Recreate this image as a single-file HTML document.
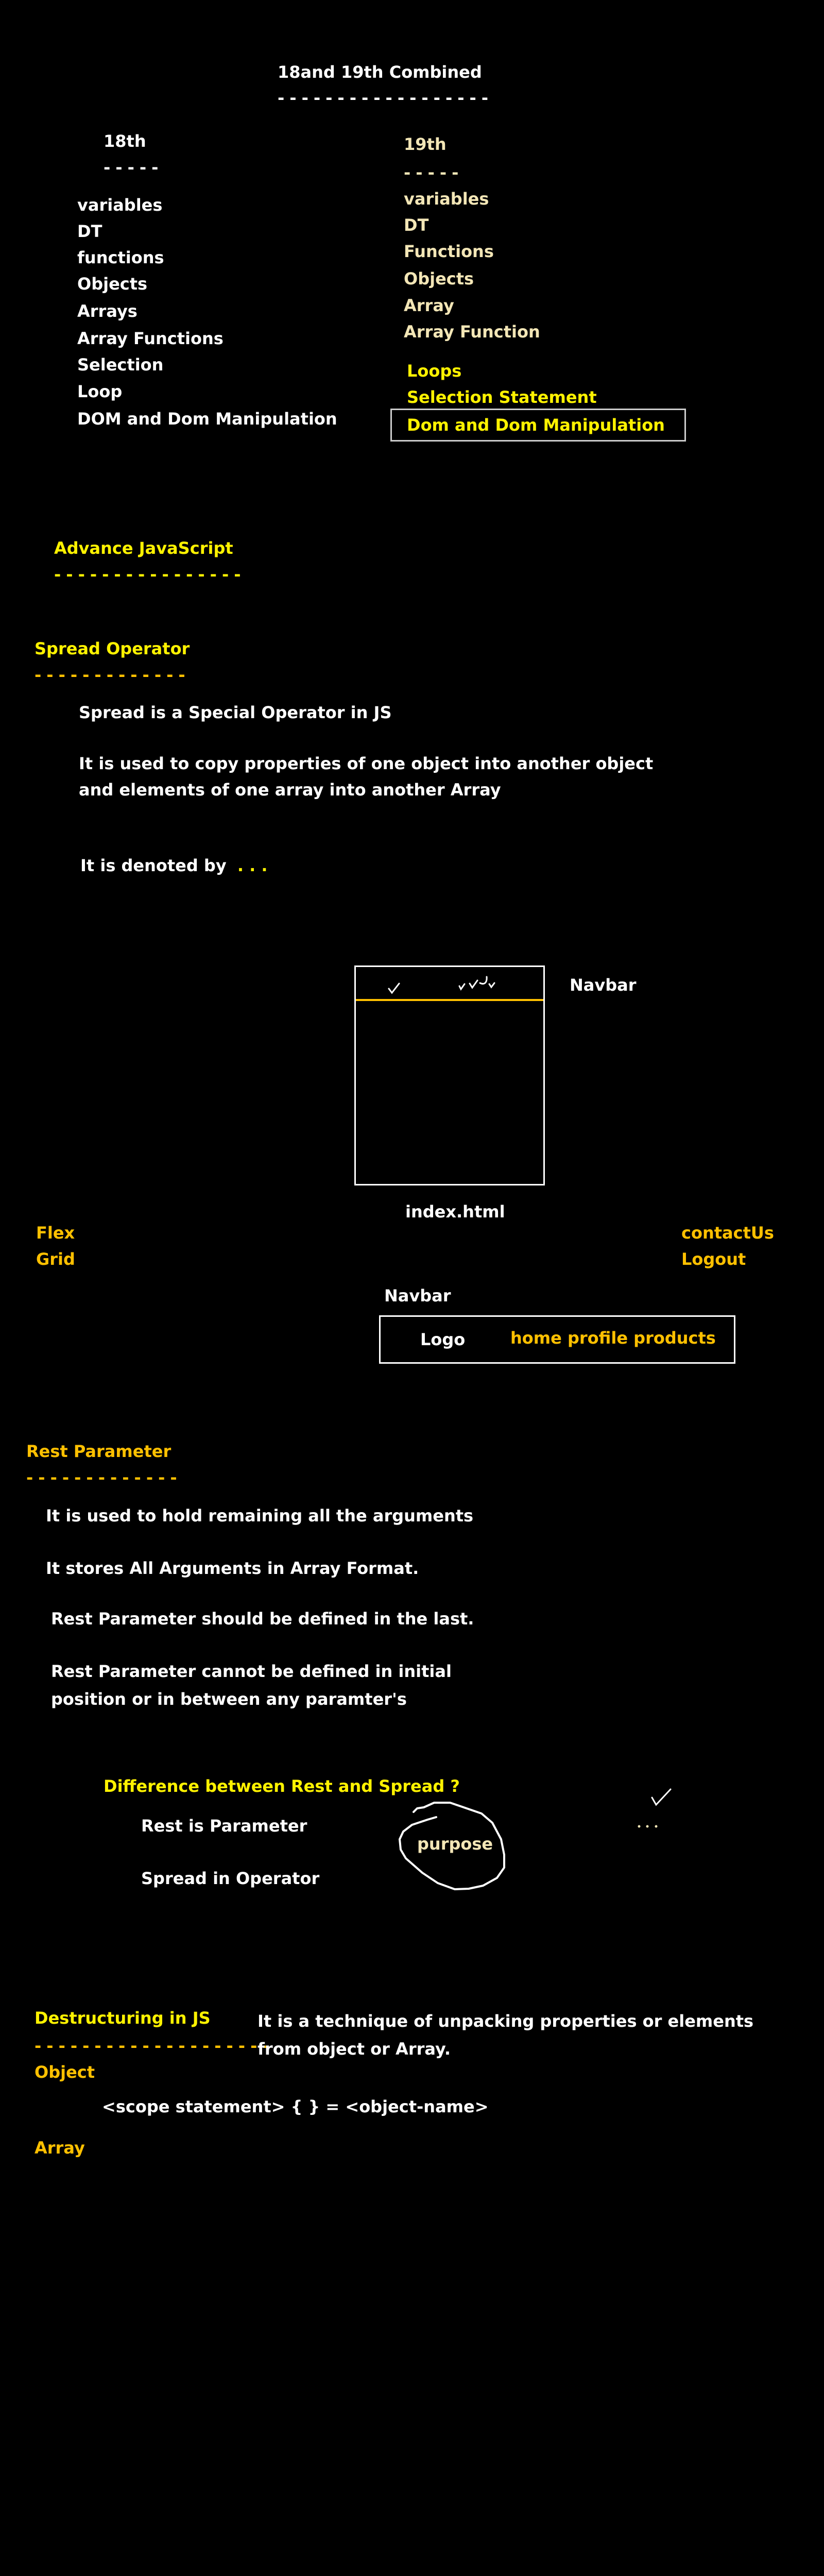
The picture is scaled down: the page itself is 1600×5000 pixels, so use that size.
<!DOCTYPE html>
<html><head><meta charset="utf-8"><style>
html,body{margin:0;padding:0;background:#000;}
body{width:1600px;height:5000px;position:relative;overflow:hidden;font-family:"DejaVu Sans","Liberation Sans",sans-serif;font-weight:bold;font-size:32px;color:#fff;}
.t{position:absolute;white-space:nowrap;line-height:40px;}
.d{letter-spacing:10px;}
.c{color:#f3e6b6}.y{color:#fff200}.o{color:#ffc000}
</style></head><body>
<div class="t" style="left:539px;top:120px">18and 19th Combined</div>
<div class="t d" style="left:539px;top:170px">------------------</div>
<div class="t" style="left:201px;top:254px">18th</div>
<div class="t d" style="left:201px;top:305px">-----</div>
<div class="t" style="left:150px;top:378px">variables</div>
<div class="t" style="left:150px;top:429px">DT</div>
<div class="t" style="left:150px;top:480px">functions</div>
<div class="t" style="left:150px;top:531px">Objects</div>
<div class="t" style="left:150px;top:584px">Arrays</div>
<div class="t" style="left:150px;top:637px">Array Functions</div>
<div class="t" style="left:150px;top:688px">Selection</div>
<div class="t" style="left:150px;top:740px">Loop</div>
<div class="t" style="left:150px;top:793px">DOM and Dom Manipulation</div>
<div class="t c" style="left:784px;top:260px">19th</div>
<div class="t c d" style="left:784px;top:315px">-----</div>
<div class="t c" style="left:784px;top:366px">variables</div>
<div class="t c" style="left:784px;top:417px">DT</div>
<div class="t c" style="left:784px;top:468px">Functions</div>
<div class="t c" style="left:784px;top:521px">Objects</div>
<div class="t c" style="left:784px;top:573px">Array</div>
<div class="t c" style="left:784px;top:624px">Array Function</div>
<div class="t y" style="left:790px;top:700px">Loops</div>
<div class="t y" style="left:790px;top:751px">Selection Statement</div>
<div style="position:absolute;left:758px;top:793px;width:568px;height:58px;border:3px solid #ccc"></div>
<div class="t y" style="left:790px;top:805px">Dom and Dom Manipulation</div>

<div class="t y" style="left:105px;top:1044px">Advance JavaScript</div>
<div class="t y d" style="left:105px;top:1095px">----------------</div>
<div class="t y" style="left:67px;top:1239px">Spread Operator</div>
<div class="t o d" style="left:67px;top:1290px">-------------</div>
<div class="t" style="left:153px;top:1363px">Spread is a Special Operator in JS</div>
<div class="t" style="left:153px;top:1462px">It is used to copy properties of one object into another object</div>
<div class="t" style="left:153px;top:1513px">and elements of one array into another Array</div>
<div class="t" style="left:156px;top:1660px">It is denoted by <span class="y" style="margin-left:10px">. . .</span></div>

<div style="position:absolute;left:688px;top:1874px;width:364px;height:421px;border:3px solid #fff"></div>
<div style="position:absolute;left:691px;top:1939px;width:364px;height:4px;background:#ffc000"></div>
<svg style="position:absolute;left:688px;top:1874px" width="370" height="70"><g fill="none" stroke="#fff" stroke-width="3" stroke-linecap="round"><path d="M67 45l6 8 14-18"/><path d="M204 40l3 6 7-10"/><path d="M224 35l5 8 10-14"/><path d="M244 34c8 4 14 0 13-12"/><path d="M262 36l4 6 6-8"/></g></svg>
<div class="t" style="left:1106px;top:1892px">Navbar</div>
<div class="t" style="left:787px;top:2332px">index.html</div>
<div class="t o" style="left:70px;top:2373px">Flex</div>
<div class="t o" style="left:70px;top:2424px">Grid</div>
<div class="t o" style="left:1323px;top:2373px">contactUs</div>
<div class="t o" style="left:1323px;top:2424px">Logout</div>
<div class="t" style="left:746px;top:2495px">Navbar</div>
<div style="position:absolute;left:736px;top:2553px;width:686px;height:88px;border:3px solid #fff"></div>
<div class="t" style="left:816px;top:2580px">Logo</div>
<div class="t o" style="left:991px;top:2577px">home profile products</div>

<div class="t o" style="left:51px;top:2797px">Rest Parameter</div>
<div class="t o d" style="left:51px;top:2848px">-------------</div>
<div class="t" style="left:89px;top:2922px">It is used to hold remaining all the arguments</div>
<div class="t" style="left:89px;top:3024px">It stores All Arguments in Array Format.</div>
<div class="t" style="left:99px;top:3122px">Rest Parameter should be defined in the last.</div>
<div class="t" style="left:99px;top:3224px">Rest Parameter cannot be defined in initial</div>
<div class="t" style="left:99px;top:3278px">position or in between any paramter's</div>
<div class="t y" style="left:201px;top:3447px">Difference between Rest and Spread ?</div>
<div class="t" style="left:274px;top:3524px">Rest is Parameter</div>
<div class="t" style="left:274px;top:3626px">Spread in Operator</div>
<svg style="position:absolute;left:760px;top:3490px" width="240" height="180"><g fill="none" stroke="#fff" stroke-width="4" stroke-linecap="round" stroke-linejoin="round"><path d="M43 27L50 20L63 18L83 9L114 9L175 30L196 48L213 80L219 110L219 135L205 155L178 170L150 176L123 177L90 165L60 145L28 117L18 100L16 80L23 65L40 52L70 42L87 37"/></g></svg>
<div class="t c" style="left:810px;top:3559px">purpose</div>
<svg style="position:absolute;left:1230px;top:3465px" width="110" height="100"><g fill="none" stroke="#fff" stroke-width="3" stroke-linecap="round"><path d="M36 24l8 14 28-30"/></g><g fill="#f3e6b6"><circle cx="11" cy="80" r="2.5"/><circle cx="27" cy="80" r="2.5"/><circle cx="44" cy="80" r="2.5"/></g></svg>

<div class="t y" style="left:67px;top:3897px">Destructuring in JS</div>
<div class="t o d" style="left:67px;top:3951px">--------------------</div>
<div class="t" style="left:500px;top:3903px">It is a technique of unpacking properties or elements</div>
<div class="t" style="left:500px;top:3957px">from object or Array.</div>
<div class="t o" style="left:67px;top:4002px">Object</div>
<div class="t" style="left:198px;top:4069px">&lt;scope statement&gt; { } = &lt;object-name&gt;</div>
<div class="t o" style="left:67px;top:4149px">Array</div>
</body></html>
